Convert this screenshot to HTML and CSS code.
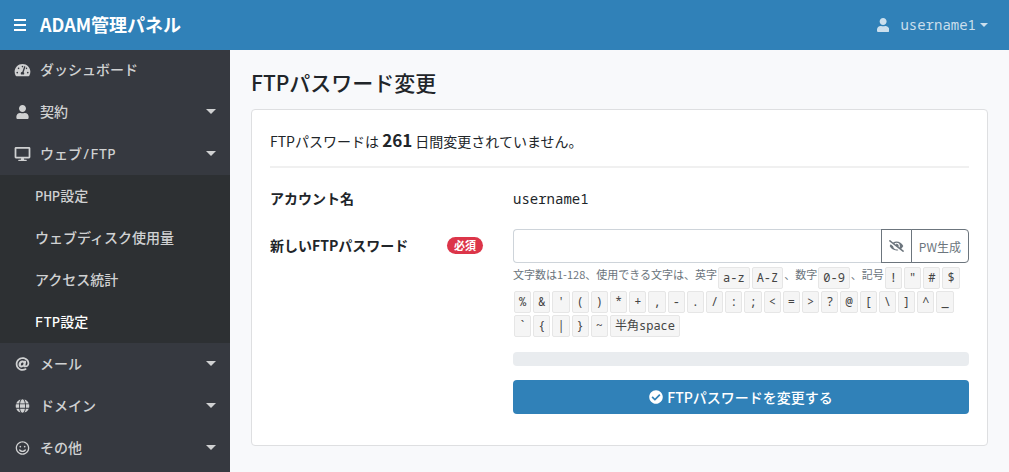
FILE: index.html
```html
<!DOCTYPE html>
<html lang="ja">
<head>
    <meta charset="UTF-8">
    <meta name="viewport" content="width=device-width, initial-scale=1.0">
    <title>FTPパスワード変更 | ADAM管理パネル</title>
    <link rel="stylesheet" href="styles.css">
</head>
<body>
    <header class="navbar">
        <button class="menu-toggle" type="button" aria-label="メニュー">
            <svg class="icon-bars" viewBox="0 0 12 12"><path d="M0 0h12v2H0zM0 5h12v2H0zM0 10h12v2H0z"/></svg>
        </button>
        <a class="brand" href="#">ADAM管理パネル</a>
        <a class="user-menu" href="#">
            <svg class="icon" viewBox="0 0 448 512"><path d="M224 256c70.7 0 128-57.3 128-128S294.7 0 224 0 96 57.3 96 128s57.3 128 128 128zm89.6 32h-16.7c-22.2 10.2-46.9 16-72.9 16s-50.6-5.8-72.9-16h-16.7C60.2 288 0 348.2 0 422.4V464c0 26.5 21.5 48 48 48h352c26.5 0 48-21.5 48-48v-41.6c0-74.2-60.2-134.4-134.4-134.4z"/></svg>
            <span class="mono">username1</span>
            <span class="dropdown-caret"></span>
        </a>
    </header>

    <div class="wrapper">
        <nav class="sidebar">
            <ul>
                <li>
                    <a href="#">
                        <svg class="icon" viewBox="0 0 576 512"><path d="M288 32C128.94 32 0 160.94 0 320c0 52.8 14.25 102.26 39.06 144.8 5.61 9.62 16.3 15.2 27.44 15.2h443c11.14 0 21.83-5.58 27.44-15.2C561.75 422.26 576 372.8 576 320c0-159.06-128.94-288-288-288zm0 64c14.71 0 26.58 10.13 30.32 23.65-1.11 2.26-2.64 4.23-3.45 6.67l-9.22 27.67c-5.13 3.49-10.97 6.01-17.64 6.01-17.67 0-32-14.33-32-32S270.33 96 288 96zM96 384c-17.67 0-32-14.33-32-32s14.33-32 32-32 32 14.33 32 32-14.33 32-32 32zm48-160c-17.67 0-32-14.33-32-32s14.33-32 32-32 32 14.33 32 32-14.33 32-32 32zm246.77-72.41l-61.33 184C343.13 347.33 352 364.54 352 384c0 11.72-3.38 22.55-8.88 32H232.88c-5.5-9.45-8.88-20.28-8.88-32 0-33.94 26.5-61.43 59.9-63.59l61.34-184.01c4.17-12.56 17.73-19.45 30.36-15.17 12.57 4.19 19.35 17.79 15.17 30.36zm14.66 57.2l15.52-46.55c3.47-1.29 7.13-2.23 11.05-2.23 17.67 0 32 14.33 32 32s-14.33 32-32 32c-11.38-.01-20.89-6.28-26.57-15.22zM480 384c-17.67 0-32-14.33-32-32s14.33-32 32-32 32 14.33 32 32-14.33 32-32 32z"/></svg>
                        ダッシュボード
                    </a>
                </li>
                <li>
                    <a class="has-children" href="#">
                        <svg class="icon" viewBox="0 0 448 512"><path d="M224 256c70.7 0 128-57.3 128-128S294.7 0 224 0 96 57.3 96 128s57.3 128 128 128zm89.6 32h-16.7c-22.2 10.2-46.9 16-72.9 16s-50.6-5.8-72.9-16h-16.7C60.2 288 0 348.2 0 422.4V464c0 26.5 21.5 48 48 48h352c26.5 0 48-21.5 48-48v-41.6c0-74.2-60.2-134.4-134.4-134.4z"/></svg>
                        契約
                    </a>
                </li>
                <li>
                    <a class="has-children" href="#">
                        <svg class="icon" viewBox="0 0 576 512"><path d="M528 0H48C21.5 0 0 21.5 0 48v320c0 26.5 21.5 48 48 48h192l-16 48h-72c-13.3 0-24 10.7-24 24s10.7 24 24 24h272c13.3 0 24-10.7 24-24s-10.7-24-24-24h-72l-16-48h192c26.5 0 48-21.5 48-48V48c0-26.5-21.5-48-48-48zm-16 352H64V64h448v288z"/></svg>
                        ウェブ/FTP
                    </a>
                    <ul class="submenu">
                        <li><a href="#">PHP設定</a></li>
                        <li><a href="#">ウェブディスク使用量</a></li>
                        <li><a href="#">アクセス統計</a></li>
                        <li><a class="active" href="#">FTP設定</a></li>
                    </ul>
                </li>
                <li>
                    <a class="has-children" href="#">
                        <svg class="icon" viewBox="0 0 512 512"><path d="M256 8C118.941 8 8 118.919 8 256c0 137.059 110.919 248 248 248 48.154 0 95.342-14.14 135.408-40.223 12.005-7.815 14.625-24.288 5.552-35.372l-10.177-12.433c-7.671-9.371-21.179-11.667-31.373-5.129C325.92 429.757 291.314 440 256 440c-101.458 0-184-82.542-184-184S154.542 72 256 72c100.139 0 184 57.619 184 160 0 38.786-21.093 79.742-58.17 83.693-17.349-.454-16.91-12.857-13.476-30.024l23.433-121.11C394.653 149.75 383.308 136 368.225 136h-44.981a13.518 13.518 0 0 0-13.432 11.993l-.01.092c-14.697-17.901-40.448-21.775-59.971-21.775-74.58 0-137.831 62.234-137.831 151.46 0 65.303 36.785 105.87 96 105.87 26.984 0 57.369-15.637 74.991-38.333 9.522 34.104 40.613 34.103 70.71 34.103C462.609 379.41 504 307.798 504 232 504 95.653 394.023 8 256 8zm-21.68 304.43c-22.249 0-36.07-15.623-36.07-40.771 0-44.993 30.779-72.729 58.63-72.729 22.292 0 35.601 15.241 35.601 40.77 0 45.061-33.875 72.73-58.161 72.73z"/></svg>
                        メール
                    </a>
                </li>
                <li>
                    <a class="has-children" href="#">
                        <svg class="icon" viewBox="0 0 496 512"><path d="M336.5 160C322 70.7 287.8 8 248 8s-74 62.7-88.5 152h177zM152 256c0 22.2 1.2 43.5 3.3 64h185.3c2.1-20.5 3.3-41.8 3.3-64s-1.2-43.5-3.3-64H155.3c-2.1 20.5-3.3 41.8-3.3 64zm324.7-96c-28.6-67.9-86.5-120.4-158-141.6 24.4 33.8 41.2 84.7 50 141.6h108zM177.2 18.4C105.8 39.6 47.8 92.1 19.3 160h108c8.7-56.9 25.5-107.8 49.9-141.6zM487.4 192H372.7c2.1 21 3.3 42.5 3.3 64s-1.2 43-3.3 64h114.6c5.5-20.5 8.6-41.8 8.6-64s-3.1-43.5-8.5-64zM120 256c0-21.5 1.2-43 3.3-64H8.6C3.2 212.5 0 233.8 0 256s3.2 43.5 8.6 64h114.6c-2-21-3.2-42.5-3.2-64zm39.5 96c14.5 89.3 48.7 152 88.5 152s74-62.7 88.5-152h-177zm159.3 141.6c71.4-21.2 129.4-73.7 158-141.6h-108c-8.8 56.9-25.6 107.8-50 141.6zM19.3 352c28.6 67.9 86.5 120.4 158 141.6-24.4-33.8-41.2-84.7-50-141.6h-108z"/></svg>
                        ドメイン
                    </a>
                </li>
                <li>
                    <a class="has-children" href="#">
                        <svg class="icon" viewBox="0 0 496 512"><path d="M248 8C111 8 0 119 0 256s111 248 248 248 248-111 248-248S385 8 248 8zm0 448c-110.3 0-200-89.7-200-200S137.7 56 248 56s200 89.7 200 200-89.7 200-200 200zm-80-216c17.7 0 32-14.3 32-32s-14.3-32-32-32-32 14.3-32 32 14.3 32 32 32zm160 0c17.7 0 32-14.3 32-32s-14.3-32-32-32-32 14.3-32 32 14.3 32 32 32zm4 72.6c-20.8 25-51.5 39.4-84 39.4s-63.2-14.3-84-39.4c-8.5-10.2-23.7-11.5-33.8-3.1-10.2 8.5-11.5 23.6-3.1 33.8 30 36 74.1 56.6 120.9 56.6s90.9-20.6 120.9-56.6c8.5-10.2 7.1-25.3-3.1-33.8-10.1-8.4-25.3-7.1-33.8 3.1z"/></svg>
                        その他
                    </a>
                </li>
            </ul>
        </nav>

        <main class="content">
            <h1>FTPパスワード変更</h1>
            <form class="card">
                <p class="notice">FTPパスワードは <strong>261</strong> 日間変更されていません。</p>
                <hr>
                <div class="form-row account-row">
                    <span class="label">アカウント名</span>
                    <span class="mono">username1</span>
                </div>
                <div class="form-row">
                    <label class="label" for="password">新しいFTPパスワード <span class="badge">必須</span></label>
                    <div>
                        <div class="input-group">
                            <input type="password" id="password">
                            <button type="button" aria-label="パスワードを表示">
                                <svg class="icon" viewBox="0 0 640 512"><path d="M320 400c-75.85 0-137.25-58.71-142.9-133.11L72.2 185.82c-13.79 17.3-26.48 35.59-36.72 55.59a32.35 32.35 0 0 0 0 29.19C89.71 376.41 197.07 448 320 448c26.91 0 52.87-4 77.89-10.46L346 397.39a144.13 144.13 0 0 1-26 2.61zm313.82 58.1l-110.55-85.44a331.25 331.25 0 0 0 81.25-102.07 32.35 32.35 0 0 0 0-29.19C550.29 135.59 442.93 64 320 64a308.15 308.15 0 0 0-147.32 37.7L45.46 3.37A16 16 0 0 0 23 6.18L3.37 31.45A16 16 0 0 0 6.18 53.9l588.36 454.73a16 16 0 0 0 22.46-2.81l19.64-25.27a16 16 0 0 0-2.82-22.45zm-183.72-142l-39.3-30.38A94.75 94.75 0 0 0 416 256a94.76 94.76 0 0 0-121.31-92.21A47.65 47.65 0 0 1 304 192a46.64 46.64 0 0 1-1.54 10l-73.61-56.89A142.31 142.31 0 0 1 320 112a143.92 143.92 0 0 1 144 144c0 21.63-5.29 41.79-13.9 60.11z"/></svg>
                            </button>
                            <button type="button">PW生成</button>
                        </div>
                        <p class="help">文字数は1-128、使用できる文字は、英字<kbd>a-z</kbd><kbd>A-Z</kbd>、数字<kbd>0-9</kbd>、記号<kbd>!</kbd><kbd>"</kbd><kbd>#</kbd><kbd>$</kbd><kbd>%</kbd><kbd>&amp;</kbd><kbd>'</kbd><kbd>(</kbd><kbd>)</kbd><kbd>*</kbd><kbd>+</kbd><kbd>,</kbd><kbd>-</kbd><kbd>.</kbd><kbd>/</kbd><kbd>:</kbd><kbd>;</kbd><kbd>&lt;</kbd><kbd>=</kbd><kbd>&gt;</kbd><kbd>?</kbd><kbd>@</kbd><kbd>[</kbd><kbd>\</kbd><kbd>]</kbd><kbd>^</kbd><kbd>_</kbd><kbd>`</kbd><kbd>{</kbd><kbd>|</kbd><kbd>}</kbd><kbd>~</kbd><kbd>半角space</kbd></p>
                        <div class="strength"></div>
                        <button class="submit" type="submit">
                            <svg class="icon" viewBox="0 0 512 512"><path d="M504 256c0 136.967-111.033 248-248 248S8 392.967 8 256 119.033 8 256 8s248 111.033 248 248zM227.314 387.314l184-184c6.248-6.248 6.248-16.379 0-22.627l-22.627-22.627c-6.248-6.249-16.379-6.249-22.628 0L216 308.118l-70.059-70.059c-6.248-6.248-16.379-6.248-22.628 0l-22.627 22.627c-6.248 6.248-6.248 16.379 0 22.627l104 104c6.249 6.249 16.379 6.249 22.628.001z"/></svg>
                            FTPパスワードを変更する
                        </button>
                    </div>
                </div>
            </form>
        </main>
    </div>
</body>
</html>
```
FILE: styles.css
```css
* {
    box-sizing: border-box;
}

body {
    margin: 0;
    min-height: 100vh;
    display: flex;
    flex-direction: column;
    font-family: "Noto Sans CJK JP", sans-serif;
    font-size: 14px;
    line-height: 21px;
    color: #212529;
    background-color: #f8f9fb;
}

ul {
    list-style: none;
    margin: 0;
    padding: 0;
}

a {
    color: inherit;
    text-decoration: none;
}

button, input {
    font: inherit;
}

button {
    cursor: pointer;
}

.icon {
    height: 14px;
    fill: currentColor;
}

.mono {
    font-family: "Noto Sans Mono", "DejaVu Sans Mono", monospace;
}

/* Header */
.navbar {
    display: flex;
    align-items: center;
    height: 50px;
    padding: 0 21px 1px 14px;
    background-color: #3081b8;
    color: #fff;
    z-index: 1;
}

.menu-toggle {
    display: flex;
    padding: 0;
    border: none;
    background: none;
    color: #fff;
}

.icon-bars {
    width: 12px;
    height: 12px;
    fill: currentColor;
}

.brand {
    margin-left: 14px;
    font-size: 18px;
    font-weight: 700;
}

.user-menu {
    display: flex;
    align-items: center;
    margin-left: auto;
    color: rgba(255, 255, 255, 0.75);
}

.user-menu .mono {
    margin-left: 11px;
}

.dropdown-caret {
    margin-left: 4px;
    border-top: 4px solid;
    border-left: 4px solid transparent;
    border-right: 4px solid transparent;
}

.wrapper {
    display: flex;
    flex: 1;
    margin-top: -1px;
}

/* Sidebar */
.sidebar {
    flex: 0 0 230px;
    background-color: #363940;
    color: #d0d1d2;
    font-family: "Noto Sans Mono", "DejaVu Sans Mono", "Noto Sans CJK JP", monospace;
    font-weight: 500;
}

.sidebar a {
    display: flex;
    align-items: center;
    height: 42px;
    padding: 0 14px 1px;
}

.sidebar .icon {
    width: 17px;
    margin-right: 9px;
}

.has-children::after {
    content: "";
    margin-left: auto;
    border-top: 5px solid;
    border-left: 5px solid transparent;
    border-right: 5px solid transparent;
}

.submenu {
    background-color: #2d3033;
}

.sidebar .submenu a {
    padding-left: 35px;
}

.submenu .active {
    color: #fff;
}

/* Content */
.content {
    flex: 1;
    min-width: 0;
    padding: 21px;
}

h1 {
    margin: 0 0 14px;
    font-size: 21px;
    font-weight: 500;
    line-height: 25px;
}

.card {
    padding: 21px 18px 31px;
    background-color: #fff;
    border: 1px solid #dedfe1;
    border-radius: 4px;
}

.notice {
    margin: 0;
}

.notice strong {
    font-size: 17px;
    line-height: 1;
}

hr {
    margin: 14px 0 20px;
    border: none;
    border-top: 2px solid #f0f0f0;
}

.form-row {
    display: grid;
    grid-template-columns: 1fr 2fr;
    column-gap: 15px;
}

.account-row {
    margin-bottom: 20px;
}

.label {
    display: flex;
    justify-content: space-between;
    align-items: center;
    align-self: start;
    font-weight: 700;
}

label.label {
    min-height: 32px;
    padding-right: 15px;
}

.badge {
    padding: 0 7px;
    border-radius: 9px;
    background-color: #dc3549;
    color: #fff;
    font-size: 11px;
    line-height: 17px;
}

.input-group {
    display: flex;
}

.input-group input {
    flex: 1;
    min-width: 0;
    height: 34px;
    padding: 0 10px;
    border: 1px solid #ced4da;
    border-right: none;
    border-radius: 4px 0 0 4px;
}

.input-group button {
    display: flex;
    align-items: center;
    padding: 0 7px;
    border: 1px solid #6c757d;
    background-color: #fff;
    color: #6c757d;
    font-size: 12px;
}

.input-group button:last-child {
    margin-left: -1px;
    border-radius: 0 4px 4px 0;
}

.input-group .icon {
    height: 12px;
}

.help {
    margin: 3px 0 14px;
    color: #6c757d;
    font-size: 11px;
    line-height: 16px;
}

kbd {
    display: inline-block;
    margin: 1px;
    padding: 0 4px;
    border: 1px solid #e6e6e6;
    border-radius: 2px;
    background-color: #f5f5f5;
    color: #444;
    font-family: "Noto Sans Mono", "DejaVu Sans Mono", "Noto Sans CJK JP", monospace;
    font-size: 12px;
    line-height: 20px;
    vertical-align: top;
}

.strength {
    height: 14px;
    margin-bottom: 14px;
    border-radius: 4px;
    background-color: #e9ecef;
}

.submit {
    display: flex;
    align-items: center;
    justify-content: center;
    gap: 4px;
    width: 100%;
    height: 34px;
    border: none;
    border-radius: 4px;
    background-color: #3081b8;
    color: #fff;
    font-weight: 500;
}
```
